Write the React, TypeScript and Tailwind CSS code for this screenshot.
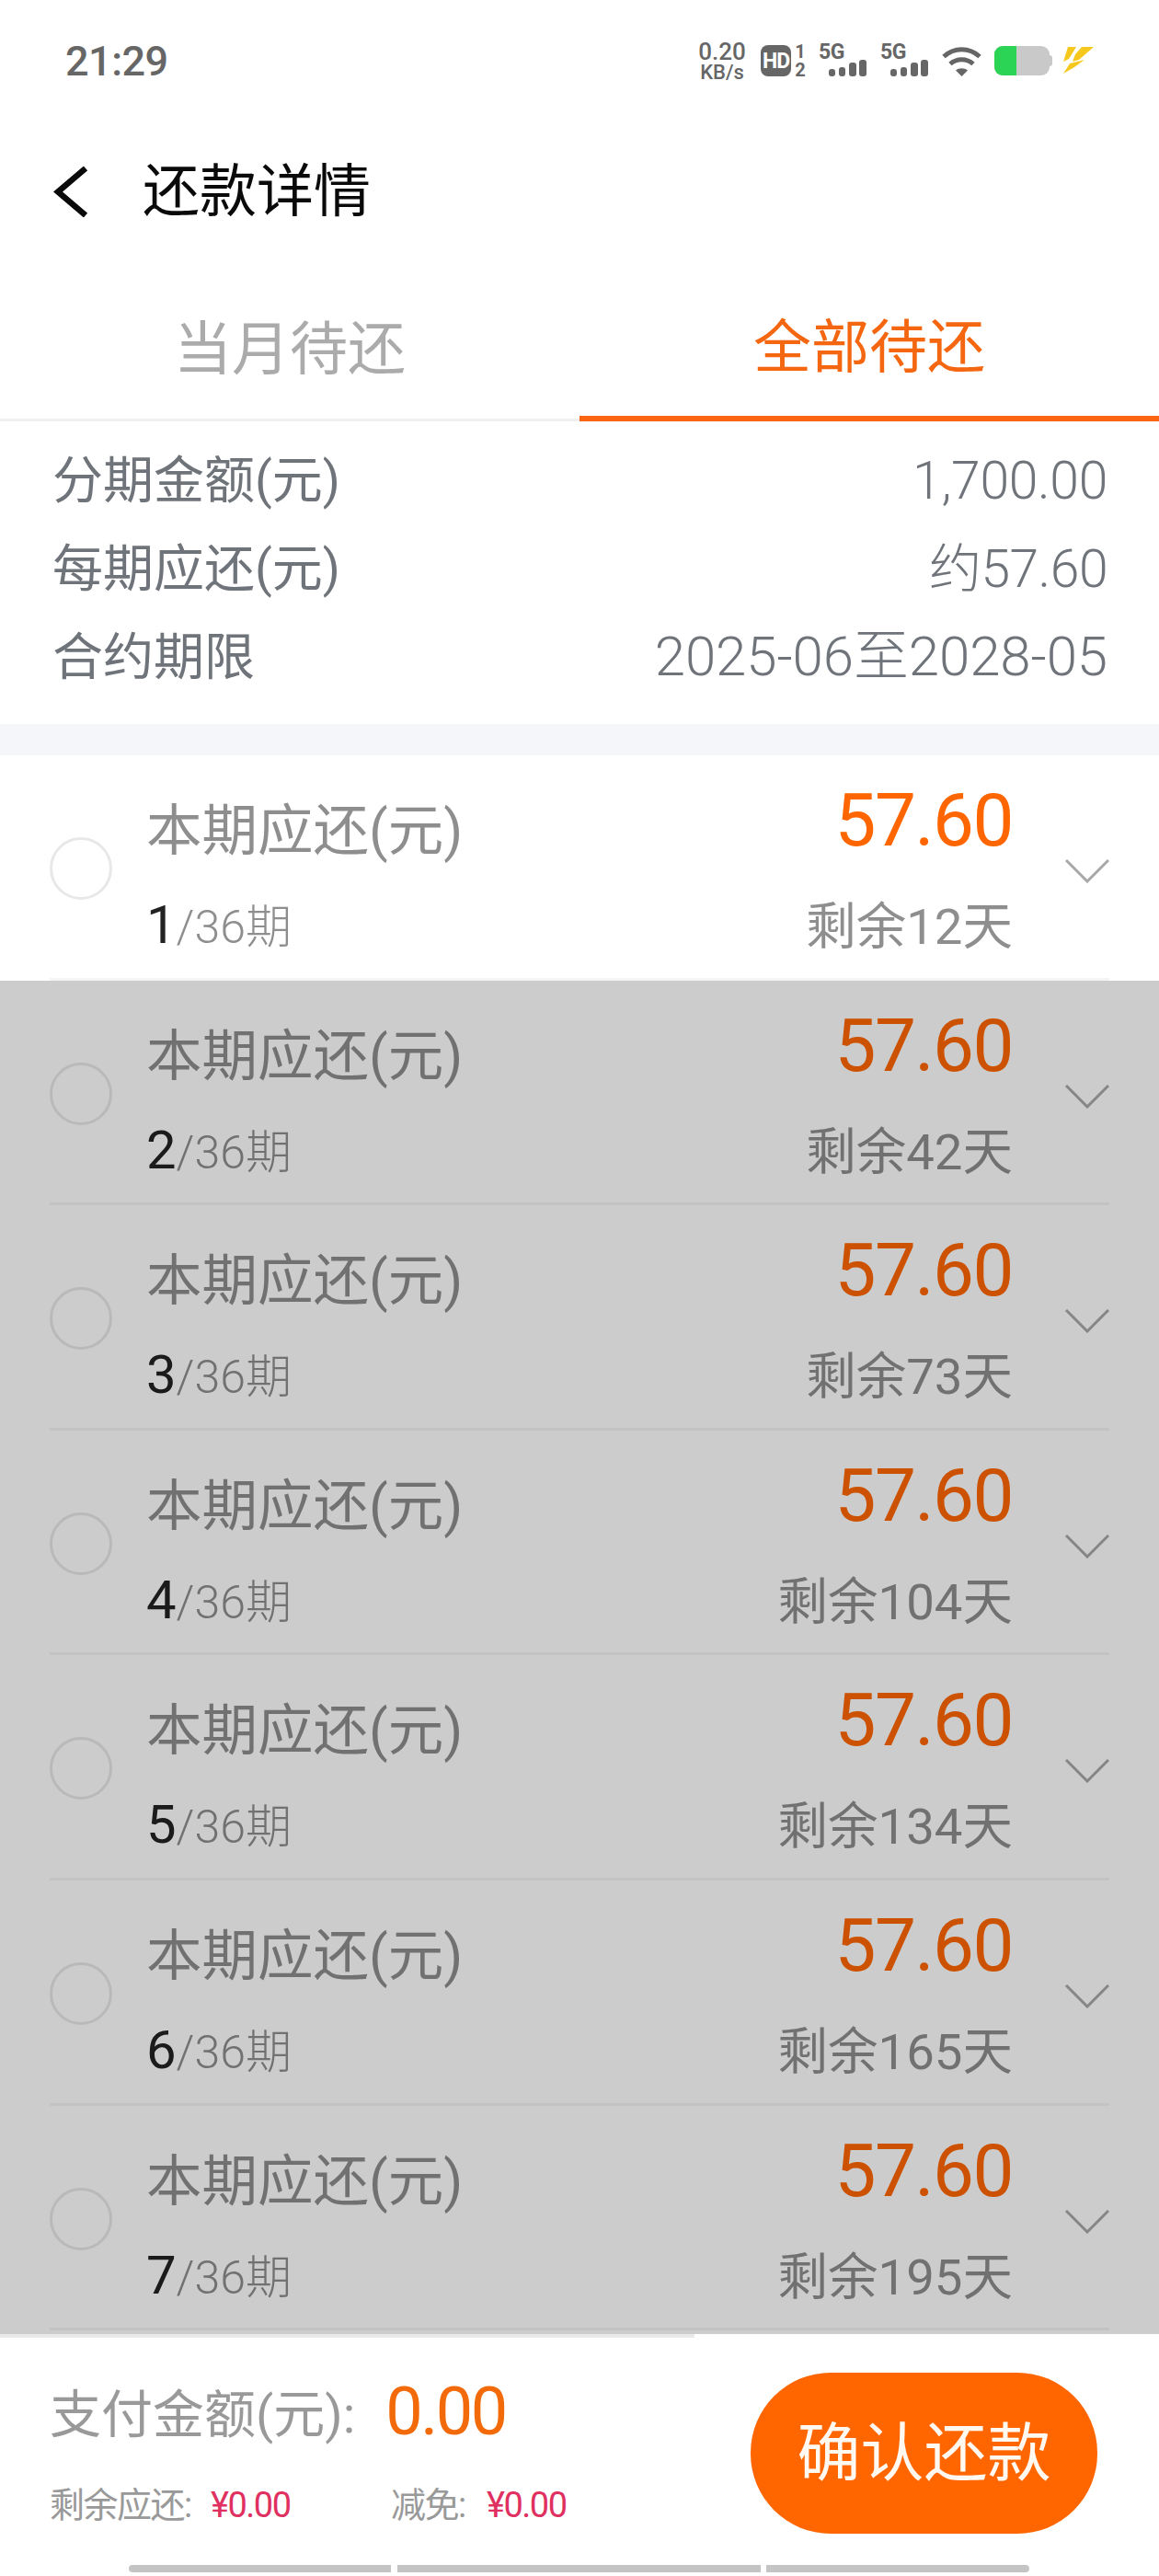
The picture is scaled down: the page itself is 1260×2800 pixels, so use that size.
const fontStack = "font-[Roboto,'Noto_Sans_CJK_SC',sans-serif]";

type Installment = {
  index: number;
  daysLeft: number;
};

const installments: Installment[] = [
  { index: 1, daysLeft: 12 },
  { index: 2, daysLeft: 42 },
  { index: 3, daysLeft: 73 },
  { index: 4, daysLeft: 104 },
  { index: 5, daysLeft: 134 },
  { index: 6, daysLeft: 165 },
  { index: 7, daysLeft: 195 },
];

const summary = [
  { label: "分期金额(元)", value: "1,700.00", valueClass: "text-[57px] tracking-[-0.3px]" },
  { label: "每期应还(元)", value: "约57.60", valueClass: "text-[57px] tracking-[-0.5px]" },
  { label: "合约期限", value: "2025-06至2028-05", valueClass: "text-[60px] tracking-[-0.1px]" },
];

const SignalIcon = () => (
  <div className="relative h-[36px] w-[52px]">
    <span className="absolute left-0 top-[-3px] text-[23px] font-bold leading-[24px] tracking-[-0.5px] text-[#666]">
      5G
    </span>
    <svg viewBox="0 0 52 36" className="absolute inset-0 h-[36px] w-[52px]" fill="#666">
      <rect x="11" y="27" width="7" height="8" rx="3" />
      <rect x="22" y="25" width="7" height="10" rx="3" />
      <rect x="33" y="20" width="8" height="15" rx="3" />
      <rect x="44" y="17" width="8" height="18" rx="3" />
    </svg>
  </div>
);

const WifiIcon = () => (
  <svg viewBox="0 0 43 33" className="h-[33px] w-[43px]" fill="none" stroke="#666" strokeWidth="5">
    <path d="M2 11.5C13 1 30 1 41 11.5" />
    <path d="M9 19.5C16 13 27 13 34 19.5" />
    <path d="M15 26.5C18.5 23.5 24.5 23.5 28 26.5L21.5 33Z" fill="#666" stroke="none" />
  </svg>
);

const BatteryIcon = () => (
  <div className="flex items-center">
    <div className="flex h-[32px] w-[60px] overflow-hidden rounded-[9px] bg-[#c9c9c9]">
      <div className="w-[24px] bg-[#2bd454]" />
    </div>
    <div className="h-[12px] w-[3px] rounded-r-sm bg-[#c9c9c9]" />
  </div>
);

const BoltIcon = () => (
  <svg viewBox="0 0 35 30" className="h-[30px] w-[35px]" fill="#f6c81e">
    <polygon points="6,0 15,0 7,13 1,16" />
    <polygon points="21,0 34,0 18,14 11,16 14,8" />
    <polygon points="8,18 24,14 13,22 1,29" />
  </svg>
);

const StatusBar = () => (
  <div className="flex h-[132px] items-center pl-[71px] pr-[70px] text-[#666]">
    <span className="text-[45px] font-medium leading-none tracking-[-0.5px]">21:29</span>
    <div className="ml-auto flex items-center">
      <div className="mt-[2px] flex h-[42px] w-[56px] flex-col items-center justify-between font-medium">
        <span className="h-[20px] text-[26px] leading-[20px]">0.20</span>
        <span className="h-[18px] text-[22px] leading-[18px]">KB/s</span>
      </div>
      <div className="ml-[14px] flex h-[34px] w-[33px] items-center justify-center rounded-[8px] bg-[#666] text-[23px] font-bold leading-none tracking-[-1px] text-white">
        HD
      </div>
      <div className="ml-[3px] flex h-[38px] w-[14px] flex-col items-center justify-between text-[20px] font-bold">
        <span className="h-[18px] leading-[18px]">1</span>
        <span className="h-[18px] leading-[18px]">2</span>
      </div>
      <div className="ml-[13px]">
        <SignalIcon />
      </div>
      <div className="ml-[15px]">
        <SignalIcon />
      </div>
      <div className="ml-[15px]">
        <WifiIcon />
      </div>
      <div className="ml-[14px]">
        <BatteryIcon />
      </div>
      <div className="ml-[11px]">
        <BoltIcon />
      </div>
    </div>
  </div>
);

const Header = () => (
  <div className="flex h-[152px] items-center pl-[58px]">
    <svg viewBox="0 0 37 55" className="h-[55px] w-[37px]" fill="none" stroke="#0a0a0a" strokeWidth="6.5">
      <path d="M35 2L5 27.5L35 53" />
    </svg>
    <h1 className="ml-[60px] pt-[2px] text-[62px] font-normal leading-none text-[#0a0a0a]">还款详情</h1>
  </div>
);

const Tabs = () => (
  <div className="flex h-[174px]">
    <div className="flex flex-1 flex-col">
      <div className="flex flex-1 items-center justify-center pt-[22px] text-[63px] leading-none text-[#ababab]">
        当月待还
      </div>
      <div className="mt-[3px] h-[3px] bg-[#f0f0f0]" />
    </div>
    <div className="flex flex-1 flex-col">
      <div className="flex flex-1 items-center justify-center pt-[19px] text-[63px] leading-none text-[#f4660f]">
        全部待还
      </div>
      <div className="h-[6px] bg-[#fb6410]" />
    </div>
  </div>
);

const Summary = () => (
  <div className="pb-[25px] pl-[57px] pr-[56px] pt-[16px] text-[#6f737a]">
    {summary.map((row) => (
      <div key={row.label} className="flex h-[96px] items-center justify-between">
        <span className="text-[55px] font-normal leading-none">{row.label}</span>
        <span className={`${row.valueClass} font-light leading-none`}>{row.value}</span>
      </div>
    ))}
  </div>
);

const InstallmentRow = ({ item }: { item: Installment }) => (
  <div className="h-[244.6px] bg-white">
    <div className="mx-[54px] flex h-full border-b-[3px] border-[#f4f4f4]">
      <div className="mt-[89px] h-[68px] w-[68px] shrink-0 rounded-full border-[3px] border-[#e8e8e8]" />
      <div className="ml-[37px] flex flex-col pt-[41px]">
        <span className="text-[60.5px] font-normal leading-[84px] text-[#8e8e8e]">本期应还(元)</span>
        <span className="leading-[118px]">
          <span className="text-[58px] font-normal text-[#222]">{item.index}</span>
          <span className="text-[50px] font-light text-[#8e8e8e]">/36期</span>
        </span>
      </div>
      <div className="ml-auto flex flex-col items-end pt-[21px]">
        <span className="text-[80px] font-normal leading-[100px] tracking-[-1.5px] text-[#ff6600]">57.60</span>
        <span className="text-[54.5px] font-normal leading-[130px] text-[#8e8e8e]">
          剩余{item.daysLeft}天
        </span>
      </div>
      <svg viewBox="0 0 48 26" className="ml-[57px] mt-[113px] h-[26px] w-[48px]" fill="none" stroke="#a8a8a8" strokeWidth="3">
        <path d="M1 1L24 24L47 1" />
      </svg>
    </div>
  </div>
);

const Footer = () => (
  <div className="flex flex-1 flex-col bg-white">
    <div className="h-[4px] w-[755px] bg-[#e9e9e9]" />
    <div className="flex h-[213px] pl-[54px] pr-[67px]">
      <div className="flex flex-col">
        <div className="flex items-center pt-[50px] leading-none">
          <span className="text-[56px] font-normal text-[#999]">支付金额(元):</span>
          <span className="ml-[33px] mt-[-5px] text-[72px] font-normal tracking-[-2.5px] text-[#f26a0a]">0.00</span>
        </div>
        <div className="mt-[46px] flex items-center text-[38px] font-normal leading-none tracking-[-1.5px]">
          <span className="w-[175px] text-[#999]">剩余应还:</span>
          <span className="w-[196px] text-[#e0305f]">¥0.00</span>
          <span className="w-[104px] text-[#999]">减免:</span>
          <span className="text-[#e0305f]">¥0.00</span>
        </div>
      </div>
      <button className="ml-auto mt-[38px] flex h-[175px] w-[377px] items-center justify-center rounded-[87px] bg-[#ff6600] pt-[2px] text-[69px] leading-none text-[#fff9f2]">
        确认还款
      </button>
    </div>
    <div className="mt-[34px] flex h-[8px] pl-[140px]">
      <div className="w-[285px] rounded-l-full bg-[#c4c4c4]" />
      <div className="ml-[7px] w-[395px] bg-[#c4c4c4]" />
      <div className="ml-[6px] w-[286px] rounded-r-full bg-[#c4c4c4]" />
    </div>
  </div>
);

export default function App() {
  return (
    <div className={`relative flex h-[2800px] w-[1260px] flex-col overflow-hidden bg-white ${fontStack}`}>
      <StatusBar />
      <Header />
      <Tabs />
      <Summary />
      <div className="h-[34px] bg-[#f5f6fa]" />
      <div className="h-[1716px]">
        {installments.map((item) => (
          <InstallmentRow key={item.index} item={item} />
        ))}
      </div>
      <Footer />
      {/* dim layer over rows 2 to 7 */}
      <div className="absolute left-0 top-[1066px] h-[1471px] w-full bg-black/20" />
    </div>
  );
}
